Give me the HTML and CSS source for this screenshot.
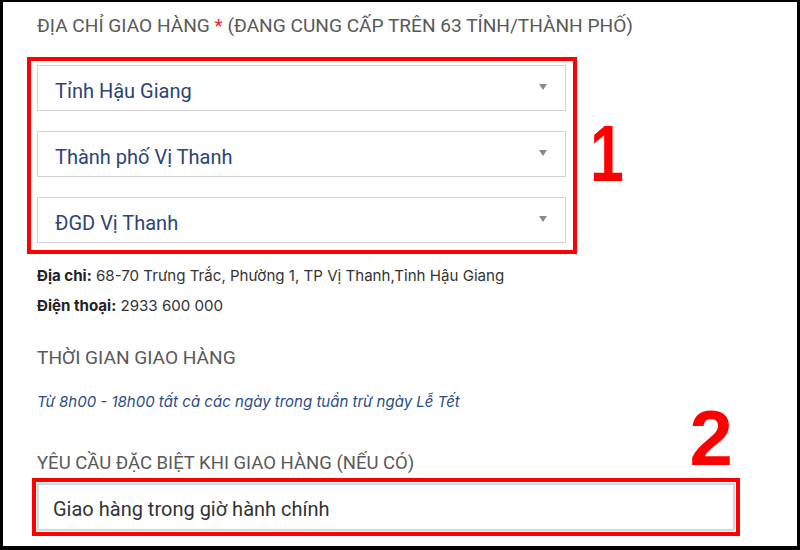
FILE: index.html
```html
<!DOCTYPE html>
<html lang="vi">
<head>
<meta charset="utf-8">
<link rel="stylesheet" href="styles.css">
</head>
<body>
<div class="frame">
  <div class="content">
    <div class="label first">ĐỊA CHỈ GIAO HÀNG <span class="req">*</span> (ĐANG CUNG CẤP TRÊN 63 TỈNH/THÀNH PHỐ)</div>
    <div class="row1">
      <div class="mark1">
        <div class="select"><span>Tỉnh Hậu Giang</span><i class="caret"></i></div>
        <div class="select"><span>Thành phố Vị Thanh</span><i class="caret"></i></div>
        <div class="select"><span>ĐGD Vị Thanh</span><i class="caret"></i></div>
      </div>
      <div class="num1">1</div>
    </div>
    <div class="info">
      <div><b>Địa chỉ:</b> 68-70 Trưng Trắc, Phường 1, TP Vị Thanh,Tỉnh Hậu Giang</div>
      <div><b>Điện thoại:</b> 2933 600 000</div>
    </div>
    <div class="label time">THỜI GIAN GIAO HÀNG</div>
    <div class="note">Từ 8h00 - 18h00 tất cả các ngày trong tuần trừ ngày Lễ Tết</div>
    <div class="label special">YÊU CẦU ĐẶC BIỆT KHI GIAO HÀNG (NẾU CÓ)</div>
    <div class="mark2">
      <div class="input">Giao hàng trong giờ hành chính</div>
      <div class="num2">2</div>
    </div>
  </div>
</div>
</body>
</html>
```

FILE: styles.css
```css
html, body {
  margin: 0;
  padding: 0;
  background: #000;
}
.frame {
  box-sizing: border-box;
  width: 800px;
  height: 550px;
  background: #fff;
  border-style: solid;
  border-color: #000;
  border-width: 2px 3px 4px 3px;
  overflow: hidden;
}
.content {
  padding: 12px 0 0 34px;
  font-family: Roboto, "Liberation Sans", sans-serif;
}
.label {
  font-size: 19.1px;
  line-height: 24px;
  color: #595959;
  white-space: nowrap;
}
.req { color: #e0262b; }
.row1 {
  display: flex;
  align-items: center;
  margin-top: 19px;
  margin-left: -10px;
}
.mark1 {
  width: 529px;
  border: 4px solid #f00;
  padding: 4px 7px 7px 6px;
  display: flex;
  flex-direction: column;
  gap: 20px;
}
.select {
  box-sizing: border-box;
  height: 46px;
  border: 1px solid #d2d2d2;
  display: flex;
  align-items: center;
  justify-content: space-between;
  padding: 5px 18px 0 17px;
  font-size: 20px;
  color: #2b4479;
}
.caret {
  width: 0;
  height: 0;
  margin-top: -8px;
  border-left: 4px solid transparent;
  border-right: 4px solid transparent;
  border-top: 6px solid #8a8a8a;
}
.num1 {
  margin-left: 13px;
  font-family: "Liberation Sans", Arial, sans-serif;
  font-weight: bold;
  font-size: 80px;
  line-height: 80px;
  color: #f00;
  margin-top: -4px;
  transform: scaleX(0.76);
  transform-origin: left center;
}
.info {
  margin-top: 7px;
  font-family: Inter, "Noto Sans", sans-serif;
  font-size: 15.1px;
  line-height: 30px;
  color: #333;
}
.info b { font-weight: 700; color: #222; }
.time { margin-top: 25px; }
.note {
  margin-top: 22px;
  font-family: Inter, "Noto Sans", sans-serif;
  font-style: italic;
  font-size: 15px;
  line-height: 20px;
  color: #2b4c86;
}
.special { margin-top: 39px; font-size: 18.5px; }
.mark2 {
  position: relative;
  margin-top: 3px;
  margin-left: -5px;
  width: 698px;
  border: 4px solid #f00;
  padding: 1px;
}
.input {
  box-sizing: border-box;
  height: 48px;
  border: 2px solid #d6d6d6;
  display: flex;
  align-items: center;
  padding: 3px 0 0 14px;
  font-size: 20px;
  color: #333;
}
.num2 {
  position: absolute;
  right: 3px;
  bottom: 64px;
  font-family: "Liberation Sans", Arial, sans-serif;
  font-weight: bold;
  font-size: 78px;
  line-height: 60px;
  color: #f00;
}
```
